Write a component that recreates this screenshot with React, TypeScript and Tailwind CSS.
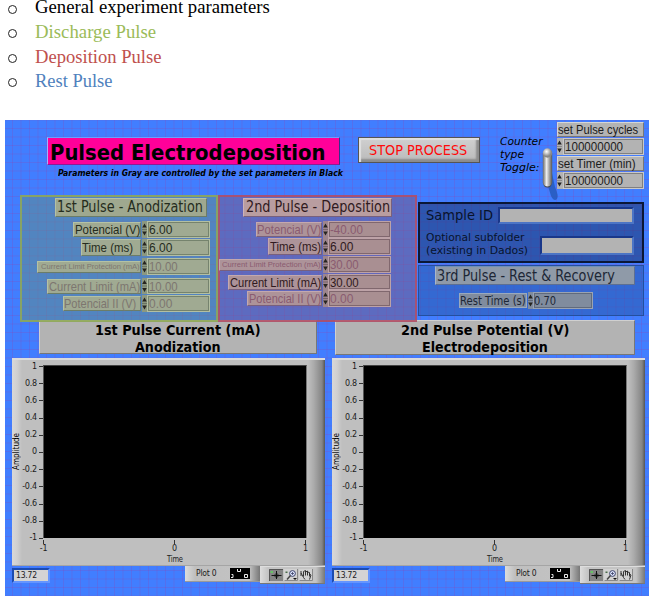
import { useLayoutEffect, useRef, useState } from "react";
import clsx from "clsx";

const TAHOMA = "font-['DejaVu_Sans_Condensed','DejaVu_Sans',sans-serif]";
const VERDANA = "font-['DejaVu_Sans',sans-serif]";
const ARIAL = "font-['Liberation_Sans',Arial,sans-serif]";

/* Single line of text condensed or expanded to a given width. */
function Fit({ w, children, className }: { w: number; children: string; className?: string }) {
  const ref = useRef<HTMLSpanElement>(null);
  const [scale, setScale] = useState(1);
  useLayoutEffect(() => {
    if (ref.current) setScale(w / ref.current.offsetWidth);
  }, [w, children]);
  return (
    <span className={clsx("block shrink-0 whitespace-nowrap", className)} style={{ width: w }}>
      <span ref={ref} className="inline-block origin-left" style={{ transform: `scaleX(${scale})` }}>
        {children}
      </span>
    </span>
  );
}

function Spinner({ dark }: { dark?: boolean }) {
  return (
    <svg viewBox="0 0 5 16" className={clsx("h-full w-[5px] shrink-0", dark ? "fill-[#222]" : "fill-[#26241f]")}>
      <path d="M2.5 2L4.800 6H.2zM2.5 14L4.800 10H.2z" />
      <path d="M0 8h5" className="stroke-black/40" strokeWidth=".6" />
    </svg>
  );
}

type Row = {
  label: string;
  value: string;
  box: string;
  row: string;
  lw: number;
  vw: number;
  size: string;
  dim?: boolean;
};

const anodization: Row[] = [
  { label: "Potencial (V)", value: "6.00", box: "w-[68px] h-[15px]", row: "h-[17px]", lw: 65, vw: 23, size: "text-[13px]" },
  { label: "Time (ms)", value: "6.00", box: "w-[60px] h-[17px]", row: "h-[17px] mt-[1px]", lw: 51, vw: 23, size: "text-[13px] pr-[7px]" },
  { label: "Current Limit Protection (mA)", value: "10.00", box: "w-[104px] h-[12px]", row: "h-[17px] mt-[2px]", lw: 99, vw: 29, size: "text-[8px]", dim: true },
  { label: "Current Limit (mA)", value: "10.00", box: "w-[94px] h-[15px]", row: "h-[16px] mt-[3px]", lw: 91, vw: 29, size: "text-[13px]", dim: true },
  { label: "Potencial II (V)", value: "0.00", box: "w-[78px] h-[15px]", row: "h-[17px] mt-[1px]", lw: 72, vw: 23, size: "text-[13px] pr-[4px]", dim: true },
];

const deposition: Row[] = [
  { label: "Potencial (V)", value: "-40.00", box: "w-[66px] h-[15px]", row: "h-[17px]", lw: 64, vw: 33, size: "text-[13px]", dim: true },
  { label: "Time (ms)", value: "6.00", box: "w-[54px] h-[17px]", row: "h-[17px]", lw: 51, vw: 23, size: "text-[13px]" },
  { label: "Current Limit Protection (mA)", value: "30.00", box: "w-[103px] h-[12px]", row: "h-[17px] mt-[1px]", lw: 99, vw: 29, size: "text-[8px]", dim: true },
  { label: "Current Limit (mA)", value: "30.00", box: "w-[94px] h-[15px]", row: "h-[16px] mt-[1px]", lw: 91, vw: 29, size: "text-[13px]" },
  { label: "Potencial II (V)", value: "0.00", box: "w-[75px] h-[15px]", row: "h-[17px]", lw: 72, vw: 23, size: "text-[13px]", dim: true },
];

function PulseGroup({ title, tw, rows, tone }: { title: string; tw: number; rows: Row[]; tone: "green" | "red" }) {
  const green = tone === "green";
  const face = green
    ? "bg-[#a0aa92] border-t-[#b4c2a4] border-l-[#b4c2a4] border-b-[#6b7d68] border-r-[#6b7d68]"
    : "bg-[#ad9399] border-t-[#c4a8ae] border-l-[#c4a8ae] border-b-[#78607d] border-r-[#78607d]";
  const head = green
    ? "bg-[#9fa88f] border-t-[#b4c2a4] border-l-[#b4c2a4] border-b-[#6b7d68] border-r-[#6b7d68]"
    : "bg-[#b99da0] border-t-[#cdb2b8] border-l-[#cdb2b8] border-b-[#78607d] border-r-[#78607d]";
  const well = green
    ? "bg-[#a0aa92] border-[#b3bfa2] outline-[#75836d]"
    : "bg-[#a98f92] border-[#bda2a7] outline-[#80676e]";
  const ink = green ? "text-[#252c1d]" : "text-[#301a20]";
  const faded = green ? "text-[#7d7670]" : "text-[#8a5b70]";
  return (
    <section
      className={clsx(
        "relative z-10 h-[127px] border-2",
        green
          ? "w-[198px] border-[#94ab50]/80 bg-[rgb(100,140,130)]/50"
          : "w-[199px] border-[#b84c62]/80 bg-[rgb(121,88,129)]/50"
      )}
    >
      <h2
        className={clsx(
          "mt-px flex h-[19px] items-center border pt-px text-[15.5px] leading-none",
          TAHOMA, head, ink,
          green ? "ml-[33px] w-[152px] pl-px" : "ml-[23px] w-[149px] pl-[2px]"
        )}
      >
        <Fit w={tw}>{title}</Fit>
      </h2>
      <div className={clsx("flex flex-col items-end", ARIAL, green ? "mt-1 pr-[6px]" : "mt-[4px] pr-[24px]")}>
        {rows.map((r) => (
          <div key={r.label} className={clsx("flex items-center", r.row)}>
            <div
              className={clsx("flex items-center justify-end border leading-none", face, r.box, r.size, r.dim ? faded : ink)}
            >
              <Fit w={r.lw}>{r.label}</Fit>
            </div>
            <div className={clsx("ml-px flex h-full", green ? "bg-[#8c9880]" : "bg-[#9d858d]")}>
              <Spinner />
              <div
                className={clsx(
                  "flex w-[63px] items-center border pl-[1px] text-[13px] leading-none outline -outline-offset-2",
                  well, r.dim ? faded : ink
                )}
              >
                <Fit w={r.vw}>{r.value}</Fit>
              </div>
            </div>
          </div>
        ))}
      </div>
    </section>
  );
}

function SetField({ label, lw }: { label: string; lw: number }) {
  return (
    <div className={clsx("flex w-[87px] flex-col text-[13px] leading-none text-[#1c1c1c]", ARIAL)}>
      <div className="flex h-[15px] items-center border border-t-[#d6d6d6] border-l-[#d6d6d6] border-b-[#777] border-r-[#777] bg-[#b3b3b3]">
        <Fit w={lw}>{label}</Fit>
      </div>
      <div className="mt-px flex h-[17px] bg-[#b3b3b3]">
        <Spinner dark />
        <div className="ml-px flex grow items-center border border-[#c9c9c9] bg-[#b3b3b3] pl-px outline outline-[#808080] -outline-offset-2">
          <Fit w={58}>100000000</Fit>
        </div>
      </div>
    </div>
  );
}

function Toggle() {
  return (
    <svg viewBox="0 0 18 56" className="mt-[27px] -mr-[6px] h-[56px] w-[18px] shrink-0">
      <defs>
        <linearGradient id="lever" x1="0" x2="1">
          <stop offset="0" stopColor="#666" />
          <stop offset=".4" stopColor="#eee" />
          <stop offset="1" stopColor="#555" />
        </linearGradient>
        <radialGradient id="knob" cx=".4" cy=".35">
          <stop offset="0" stopColor="#fff" />
          <stop offset="1" stopColor="#888" />
        </radialGradient>
      </defs>
      <path d="M5 36L9 49Q12 55 15 52Q17 49 13 40L10 26Z" fill="#2458b8" opacity=".8" />
      <rect x=".8" y="2" width="9.4" height="38" rx="4.700" fill="url(#lever)" />
      <circle cx="5.500" cy="6" r="4.700" fill="url(#knob)" />
      <path d="M1.500 35.500a4 4 0 0 0 8 0v1a4 4 0 0 1-8 0z" fill="#444" />
    </svg>
  );
}

const Y_TICKS = ["1", "0.8", "0.6", "0.4", "0.2", "0", "-0.2", "-0.4", "-0.6", "-0.8", "-1"];

function Chart() {
  return (
    <div className={clsx("flex w-[313px] flex-col text-[8px] leading-none tracking-[-0.2px] text-[#1b1b1b]", VERDANA)}>
      <div className="flex h-[208px] flex-col border-t-2 border-t-[#dcdcdc] border-b border-b-[#a5a5a5] bg-[linear-gradient(90deg,#d8d8d8_0,#d0d0d0_5px,#bfbfbf_10px,#bfbfbf_296px,#aaa_302px,#858585_310px,#555_313px)]">
        <div className="mt-[5px] flex h-[173px]">
          <div className="flex w-[9px] items-center justify-center">
            <span className={clsx("rotate-180 text-[8px] tracking-normal text-black [writing-mode:vertical-rl]", TAHOMA)}>Amplitude</span>
          </div>
          <div className="-mt-[3px] -mb-[5px] flex w-[22px] flex-col justify-between">
            {Y_TICKS.map((t) => (
              <div key={t} className="flex h-[9px] items-center justify-end gap-[2px]">
                <span>{t}</span>
                <span className="h-px w-[4px] shrink-0 bg-[#333]" />
              </div>
            ))}
          </div>
          <div className="w-[264px] border-t border-l border-r border-t-[#444] border-l-[#555] border-r-[#777] bg-black" />
        </div>
        <div className="ml-[27px] mt-[2px] flex w-[271px] justify-between">
          {["-1", "0", "1"].map((t) => (
            <div key={t} className="flex w-[9px] flex-col items-center gap-[1px]">
              <span className="h-[4px] w-px bg-[#333]" />
              <span>{t}</span>
            </div>
          ))}
        </div>
        <div className="ml-[27px] mt-[3px] flex w-[271px] justify-center"><Fit w={16}>Time</Fit></div>
      </div>
      <div className="flex h-[18px]">
        <div className="mt-[2px] flex h-[15px] w-[38px] border-2 border-t-[#1c4bb0] border-l-[#1c4bb0] border-b-[#6495ff] border-r-[#6495ff] bg-[#d4d4d4]">
          <div className="flex items-center pl-[2px]"><Fit w={21}>13.72</Fit></div>
        </div>
        <div className="ml-[135px] flex h-[16px] w-[75px] items-center border-b border-b-[#999] bg-[linear-gradient(90deg,#dcdcdc_0,#bfbfbf_10px,#c3c3c3_64px,#777_75px)] pl-[11px]">
          <Fit w={21}>Plot 0</Fit>
          <svg viewBox="0 0 20 11" className="ml-[13px] h-[11px] w-[20px]" fill="none" stroke="#e8e8e8">
            <path d="M0 0h20v11H0z" fill="#000" stroke="none" />
            <path d="M7.500 1v2.500h3V1M1.500 6.500H3v3H1M14.500 6.500h3v3h-3z" />
          </svg>
        </div>
        <div className="flex h-[18px] w-[65px] items-center gap-[1px] border-t border-b border-t-[#ddd] border-b-[#777] bg-[linear-gradient(90deg,#ddd_0,#c4c4c4_8px,#c4c4c4_56px,#777_65px)] pl-[9px]">
          <svg viewBox="0 0 14 12" className="h-[12px] w-[14px]" fill="none">
            <path d="M0 0h14v12H0z" fill="#858585" />
            <path d="M.5 12V.5H14" stroke="#555" />
            <path d="M7.500 2v8M2.500 6.500h10" stroke="#111" />
            <path d="M6 5h3v3H6z" stroke="#111" strokeWidth=".6" />
            <path d="M1.500 2.500H4v1H1.500z" fill="#4f4" />
          </svg>
          <svg viewBox="0 0 14 12" className="h-[12px] w-[14px]" fill="none">
            <path d="M0 0h14v12H0z" fill="#d2d2d2" />
            <path d="M.5 11.500h13V0" stroke="#888" />
            <circle cx="8.500" cy="4.500" r="2.900" fill="#dce4ff" stroke="#3c4268" />
            <path d="M7 4.500h3M8.500 3v3" stroke="#3c4268" strokeWidth=".8" />
            <path d="M6.500 6.500L3 10.500" stroke="#444" strokeWidth="1.500" />
            <path d="M1.500 2.500h2v1.500h-2z" fill="#496b49" />
            <path d="M9 9h4l-2 2z" fill="#111" />
          </svg>
          <svg viewBox="0 0 14 12" className="h-[12px] w-[14px]" fill="none">
            <path d="M0 0h14v12H0z" fill="#d2d2d2" />
            <path d="M.5 11.500h13V0" stroke="#888" />
            <path d="M2 2v5M4.500 7.500v-5l2-1v5M6.500 3l2-1v4.500M8.500 3l2 .5v4M2 4l2.500 4.500L6 10.500M10.500 5l1.500 1-1.500 4.500" stroke="#222" strokeWidth=".9" />
          </svg>
        </div>
      </div>
    </div>
  );
}

function ChartTitle({ lines, widths, className }: { lines: string[]; widths: number[]; className: string }) {
  return (
    <h2
      className={clsx(
        "flex flex-col items-center border border-t-[#d0d0d0] border-l-[#d0d0d0] border-b-[#777] border-r-[#777] bg-[#b3b3b3] pt-[1px] text-[14px] leading-[17px] font-bold text-black",
        TAHOMA, className
      )}
    >
      {lines.map((l, i) => (
        <Fit key={l} w={widths[i]}>{l}</Fit>
      ))}
    </h2>
  );
}

const outline = [
  { text: "General experiment parameters", w: 235, color: "text-black", row: "h-[17px]" },
  { text: "Discharge Pulse", w: 121, color: "text-[#9bbb59]", row: "h-[25px] pt-[6px]" },
  { text: "Deposition Pulse", w: 127, color: "text-[#c0504d]", row: "h-[25px] pt-[6px]" },
  { text: "Rest Pulse", w: 78, color: "text-[#4f81bd]", row: "-mt-px h-[25px] pt-[6px]" },
];

export default function App() {
  return (
    <main className="h-[596px] w-[649px] overflow-hidden bg-white">
      <ul className="flex h-[120px] flex-col pl-[8px] font-['Liberation_Serif',serif] text-[18px] leading-none">
        {outline.map((o, i) => (
          <li key={o.text} className={clsx("flex shrink-0 items-center", o.row)}>
            <span className="mt-[1px] mr-[18px] size-[9px] shrink-0 rounded-full border border-[#222]" />
            <Fit w={o.w} className={clsx(o.color, i === 0 ? "-mt-[4px]" : "-mt-px")}>{o.text}</Fit>
          </li>
        ))}
      </ul>

      <div className="ml-[5px] flex h-[476px] w-[644px] flex-col bg-[#417eff] bg-[linear-gradient(90deg,rgba(140,70,180,.26)_1px,transparent_1px),linear-gradient(rgba(140,70,180,.26)_1px,transparent_1px)] bg-[size:8.5px_8.5px] bg-[position:7px_8px]">
        <header className="flex h-[75px] shrink-0 items-start">
          <div className="ml-[42px] w-[293px] pt-[17px]">
            <h1 className={clsx("flex h-[28px] items-center border border-t-[#68a0ff] border-l-[#9db4ff] border-b-[#8c1b97] border-r-[#31318d] bg-[#ff0099] pt-[3px] pl-[2px] text-[21.5px] leading-none font-bold text-black", TAHOMA)}>
              <Fit w={275}>Pulsed Electrodeposition</Fit>
            </h1>
            <p className={clsx("mt-[3px] ml-[11px] text-[9px] leading-[11px] font-bold italic text-black", TAHOMA)}>
              <Fit w={285}>Parameters in Gray are controlled by the set parameters in Black</Fit>
            </p>
          </div>
          <button className={clsx("mt-[17px] ml-[18px] flex h-[26px] w-[122px] items-center border border-[#555] bg-[linear-gradient(#d0d0d0,#bababa)] pl-[9px] text-[14px] leading-none text-[#ff0a0a] shadow-[inset_2px_2px_1px_#e0e0e0,inset_-3px_-3px_2px_#8c8c8c]", TAHOMA)}>
            <Fit w={98}>STOP PROCESS</Fit>
          </button>
          <div className={clsx("mt-[15px] ml-[20px] w-[42px] text-[11px] leading-[13px] text-black italic", TAHOMA)}>
            <Fit w={43}>Counter</Fit>
            <Fit w={24}>type</Fit>
            <Fit w={39}>Toggle:</Fit>
          </div>
          <Toggle />
          <div className="mt-[2px] ml-[3px] flex flex-col gap-[1px]">
            <SetField label="set Pulse cycles" lw={80} />
            <SetField label="set Timer  (min)" lw={78} />
          </div>
        </header>

        <div className="flex h-[125px] shrink-0 items-start pl-[15px]">
          <PulseGroup title="1st Pulse - Anodization" tw={146} rows={anodization} tone="green" />
          <PulseGroup title="2nd Pulse - Deposition" tw={144} rows={deposition} tone="red" />
          <div className={clsx("ml-px mt-[7px] w-[226px] text-[#08132c]", TAHOMA)}>
            <section className="h-[61px] border-2 border-[#0a1736] bg-[rgb(25,46,97)]/50 pl-[6px]">
              <div className="flex h-[22px] items-center text-[14.5px] leading-none">
                <Fit w={67}>Sample ID</Fit>
                <div className="ml-[5px] h-[17px] w-[136px] border-2 border-t-[#19378a] border-l-[#19378a] border-b-[#4c75c5] border-r-[#4c75c5] bg-[#b3b3b3]" />
              </div>
              <div className="mt-[2px] flex h-[32px] items-center text-[11px] leading-[13px]">
                <div className="w-[113px]">
                  <Fit w={98}>Optional subfolder</Fit>
                  <Fit w={102}>(existing in Dados)</Fit>
                </div>
                <div className="mt-[2px] ml-px h-[19px] w-[94px] border-2 border-t-[#19378a] border-l-[#19378a] border-b-[#4c75c5] border-r-[#4c75c5] bg-[#b3b3b3]" />
              </div>
            </section>
            <section className="mt-[2px] h-[51px] border border-[#244f9e] bg-[rgb(40,84,165)]/50 text-[#1d2736]">
              <h2 className="ml-[16px] flex h-[19px] w-[200px] items-center border border-t-[#6e8fb8] border-l-[#a9b6c8] border-b-[#5d6f92] border-r-[#5d6f92] bg-[#8f9aa8] pt-[2px] pl-[1px] text-[15.5px] leading-none">
                <Fit w={178}>3rd Pulse - Rest &amp; Recovery</Fit>
              </h2>
              <div className="mt-[7px] ml-[40px] flex h-[17px] items-center text-[12px] leading-none">
                <div className="flex h-[15px] w-[68px] items-center border border-[#9aa9bd] bg-[#808c9e]"><Fit w={66}>Rest Time (s)</Fit></div>
                <div className="ml-px flex h-full bg-[#808c9e]">
                  <Spinner />
                  <div className="flex w-[60px] items-center border border-[#9aa3b2] bg-[#808c9e] outline outline-[#606b7d] -outline-offset-2"><Fit w={22}>0.70</Fit></div>
                </div>
              </div>
            </section>
          </div>
        </div>

        <div className="flex h-[38px] shrink-0 items-start pl-[34px]">
          <ChartTitle lines={["1st Pulse Current (mA)", "Anodization"]} widths={[166, 86]} className="h-[34px] w-[278px]" />
          <ChartTitle lines={["2nd Pulse Potential (V)", "Electrodeposition"]} widths={[168, 126]} className="ml-[18px] h-[35px] w-[300px]" />
        </div>

        <div className="flex shrink-0 gap-[7px] pl-[7px]">
          <Chart />
          <Chart />
        </div>
      </div>
    </main>
  );
}
